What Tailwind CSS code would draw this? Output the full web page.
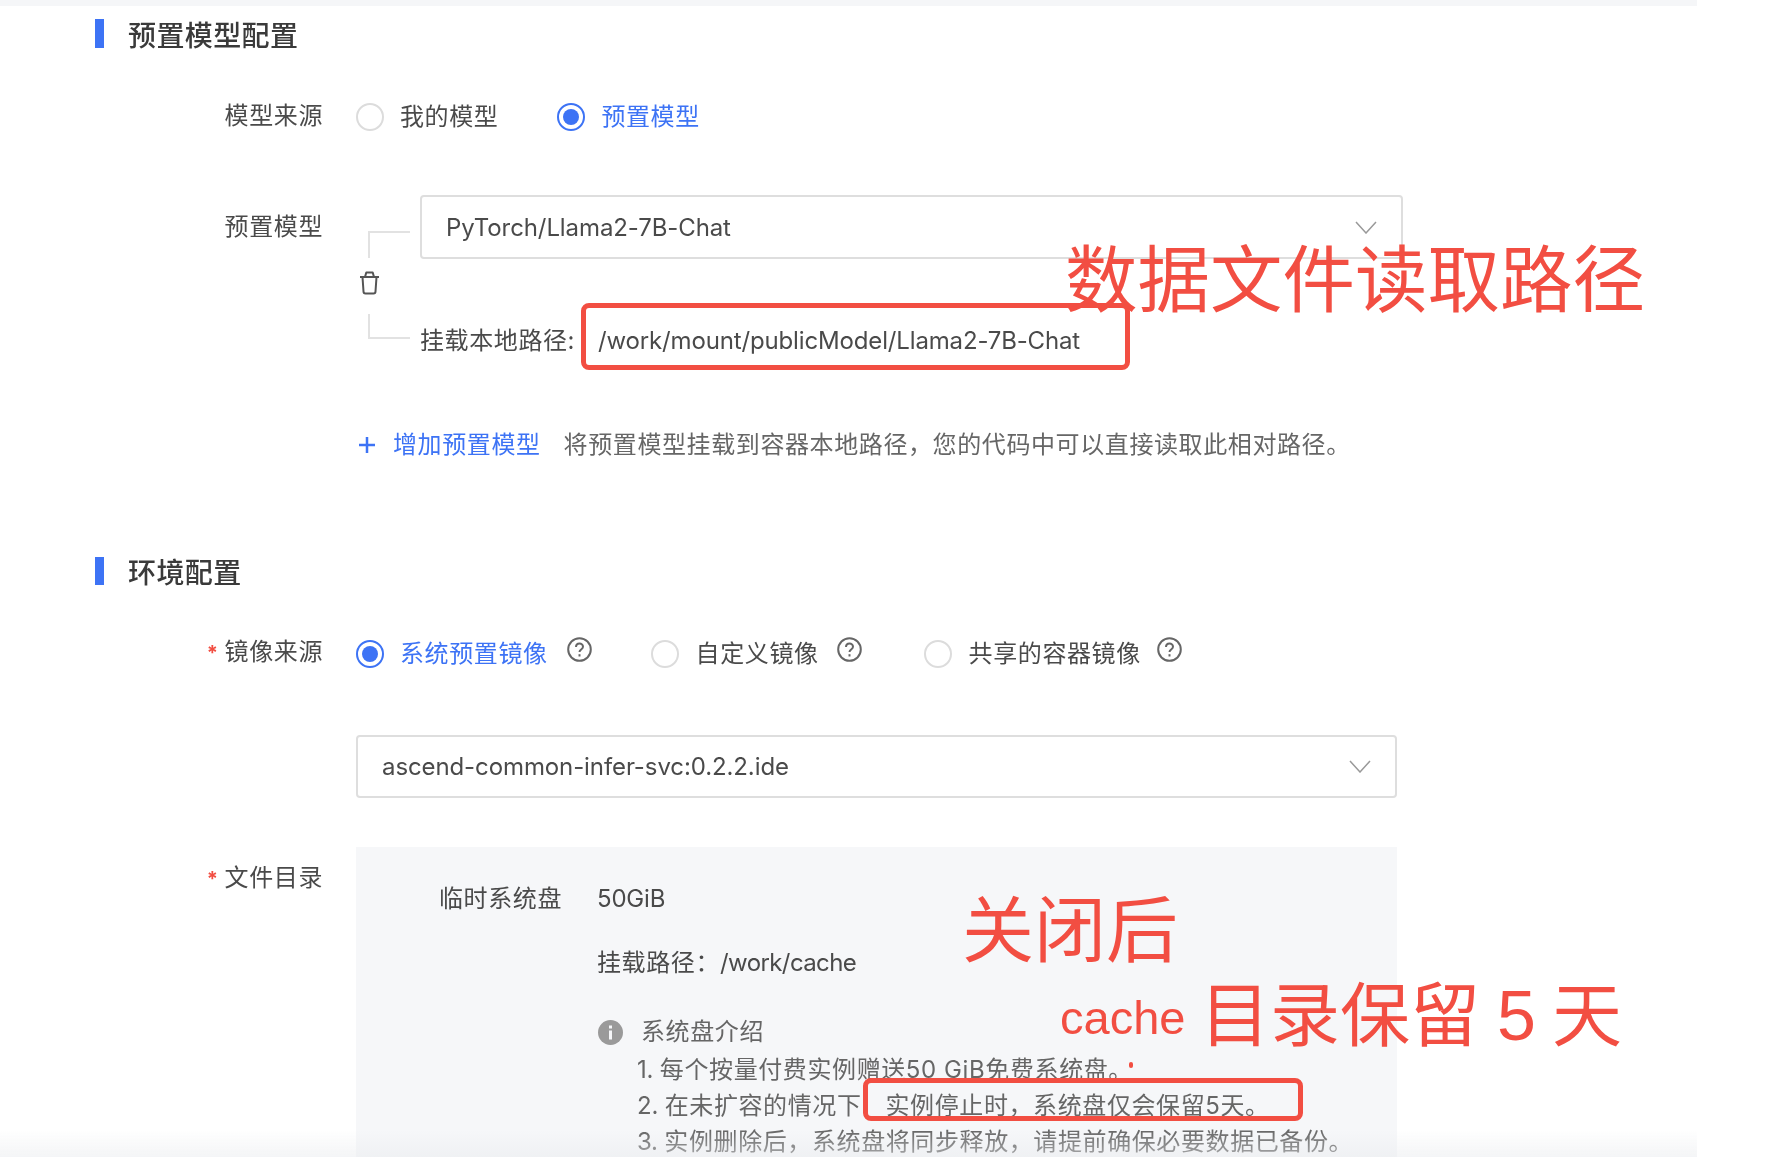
<!DOCTYPE html>
<html lang="zh-CN">
<head>
    <meta charset="UTF-8">
    <title>预置模型配置</title>
    <script src="https://cdn.jsdelivr.net/npm/@tailwindcss/browser@4"></script>
</head>
<body class="bg-white font-['Inter','Noto_Sans_CJK_SC',sans-serif] text-[24px] tracking-[0.6px] text-[#4a4a4a]">
<div class="relative w-[1791px] h-[1170px] overflow-hidden blur-[0.5px]">
    <div class="h-[6px] w-[1697px] bg-[#f5f6f8]"></div>

    <div class="w-[1697px] h-[1151px] overflow-hidden">
        <!-- 预置模型配置 -->
        <div class="flex items-center h-[29px] mt-[13px] pl-[95px]">
            <div class="w-[9px] h-[29px] bg-[#3d73f5]"></div>
            <h2 class="ml-[24px] mt-[5px] text-[28px] leading-[29px] tracking-[0.4px] font-medium text-[#3a3a3a]">预置模型配置</h2>
        </div>

        <div class="flex items-center h-[28px] mt-[55px]">
            <div class="w-[323px] text-right leading-[24px] -mt-[3px]">模型来源</div>
            <div class="w-[28px] h-[28px] ml-[33px] rounded-full border-2 border-[#dcdcdc]"></div>
            <span class="ml-[16px] leading-[28px]">我的模型</span>
            <div class="w-[28px] h-[28px] ml-[59px] rounded-full border-2 border-[#3d73f5] flex items-center justify-center">
                <div class="w-[16px] h-[16px] rounded-full bg-[#3d73f5]"></div>
            </div>
            <span class="ml-[16px] leading-[28px] text-[#3d73f5]">预置模型</span>
        </div>

        <div class="flex items-start mt-[64px]">
            <div class="w-[323px] text-right leading-[24px] mt-[20px] shrink-0">预置模型</div>
            <div class="w-[97px] shrink-0 flex flex-col items-start pl-[45px] h-[175px]">
                <div class="w-[42px] h-[27px] mt-[36px] border-l-2 border-t-2 border-[#e2e2e2]"></div>
                <svg class="w-[21px] h-[24px] -ml-[9px] mt-[13px]" viewBox="0 0 21 24" fill="none" stroke="#555555" stroke-width="2" stroke-linejoin="round">
                    <path d="M1 6h19M6 6l1.300-4.500h6.400L15 6"/>
                    <path d="M3.500 6l1 14.500a2 2 0 0 0 2 2h8a2 2 0 0 0 2-2l1-14.500"/>
                </svg>
                <div class="w-[42px] h-[25px] mt-[19px] border-l-2 border-b-2 border-[#e2e2e2]"></div>
            </div>
            <div class="flex-1 min-w-0">
                <div class="w-[983px] h-[64px] border-2 border-[#dedede] rounded-[4px] flex items-center justify-between pl-[24px] pr-[24px]">
                    <span class="pt-[2px] tracking-[-0.1px]">PyTorch/Llama2-7B-Chat</span>
                    <svg class="w-[22px] h-[13px]" viewBox="0 0 22 13" fill="none" stroke="#999999" stroke-width="1.500"><path d="M1 1l10 11 10-11"/></svg>
                </div>
                <div class="flex items-center h-[67px] mt-[44px]">
                    <span class="w-[161px] shrink-0 pt-[8px]">挂载本地路径:</span>
                    <div class="w-[549px] h-[67px] border-[5px] border-[#f24e42] rounded-[8px] flex items-center pl-[12px] pt-[8px] tracking-[-0.15px]">/work/mount/publicModel/Llama2-7B-Chat</div>
                </div>
            </div>
        </div>

        <div class="flex items-center h-[30px] mt-[60px] pl-[358px]">
            <svg class="w-[18px] h-[18px]" viewBox="0 0 18 18" fill="none" stroke="#3d73f5" stroke-width="2.500"><path d="M9 1v16M1 9h16"/></svg>
            <span class="ml-[17px] text-[#3d73f5]">增加预置模型</span>
            <span class="ml-[23px] text-[#666666]">将预置模型挂载到容器本地路径，您的代码中可以直接读取此相对路径。</span>
        </div>

        <!-- 环境配置 -->
        <div class="flex items-center h-[28px] mt-[97px] pl-[95px]">
            <div class="w-[9px] h-[28px] bg-[#3d73f5]"></div>
            <h2 class="ml-[24px] mt-[3px] text-[28px] leading-[28px] tracking-[0.4px] font-medium text-[#3a3a3a]">环境配置</h2>
        </div>

        <div class="flex items-center h-[28px] mt-[55px]">
            <div class="w-[323px] text-right leading-[24px] -mt-[4px]"><span class="text-[#f24e42] text-[20px] font-bold mr-[6px]">*</span>镜像来源</div>
            <div class="w-[28px] h-[28px] ml-[33px] rounded-full border-2 border-[#3d73f5] flex items-center justify-center">
                <div class="w-[16px] h-[16px] rounded-full bg-[#3d73f5]"></div>
            </div>
            <span class="ml-[16px] text-[#3d73f5]">系统预置镜像</span>
            <svg class="w-[25px] h-[25px] ml-[19px] -mt-[10px]" viewBox="0 0 25 25" fill="none" stroke="#666666" stroke-width="2"><circle cx="12.500" cy="12.500" r="11.300"/><path d="M9 10c0-2 1.500-3.500 3.500-3.500s3.500 1.500 3.500 3.200c0 2.800-3.500 2.800-3.500 5.300"/><path d="M12.500 17.200v2.300"/></svg>
            <div class="w-[28px] h-[28px] ml-[59px] rounded-full border-2 border-[#dcdcdc]"></div>
            <span class="ml-[17px]">自定义镜像</span>
            <svg class="w-[25px] h-[25px] ml-[18px] -mt-[10px]" viewBox="0 0 25 25" fill="none" stroke="#666666" stroke-width="2"><circle cx="12.500" cy="12.500" r="11.300"/><path d="M9 10c0-2 1.500-3.500 3.500-3.500s3.500 1.500 3.500 3.200c0 2.800-3.500 2.800-3.500 5.300"/><path d="M12.500 17.200v2.300"/></svg>
            <div class="w-[28px] h-[28px] ml-[62px] rounded-full border-2 border-[#dcdcdc]"></div>
            <span class="ml-[17px]">共享的容器镜像</span>
            <svg class="w-[25px] h-[25px] ml-[16px] -mt-[10px]" viewBox="0 0 25 25" fill="none" stroke="#666666" stroke-width="2"><circle cx="12.500" cy="12.500" r="11.300"/><path d="M9 10c0-2 1.500-3.500 3.500-3.500s3.500 1.500 3.500 3.200c0 2.800-3.500 2.800-3.500 5.300"/><path d="M12.500 17.200v2.300"/></svg>
        </div>

        <div class="ml-[356px] w-[1041px] h-[63px] mt-[67px] border-2 border-[#dedede] rounded-[4px] flex items-center justify-between pl-[24px] pr-[24px]">
            <span class="tracking-[-0.1px]">ascend-common-infer-svc:0.2.2.ide</span>
            <svg class="w-[22px] h-[13px]" viewBox="0 0 22 13" fill="none" stroke="#999999" stroke-width="1.500"><path d="M1 1l10 11 10-11"/></svg>
        </div>

        <div class="flex items-start mt-[49px]">
            <div class="w-[323px] text-right leading-[24px] mt-[19px] shrink-0"><span class="text-[#f24e42] text-[20px] font-bold mr-[6px]">*</span>文件目录</div>
            <div class="ml-[33px] w-[1041px] h-[310px] bg-[#f6f7f9]">
                <div class="flex h-[28px] mt-[38px] items-center">
                    <span class="w-[206px] text-right shrink-0">临时系统盘</span>
                    <span class="ml-[35px] tracking-[-0.2px]">50GiB</span>
                </div>
                <div class="pl-[241px] mt-[36px] leading-[28px]">挂载路径：<span class="tracking-[-0.6px]">/work/cache</span></div>
                <div class="flex items-center pl-[242px] h-[28px] mt-[41px] text-[#666666]">
                    <svg class="w-[25px] h-[25px]" viewBox="0 0 25 25"><circle cx="12.500" cy="12.500" r="12.500" fill="#9a9a9a"/><rect x="11" y="10.500" width="3" height="9" fill="#f6f7f9"/><rect x="11" y="5.500" width="3" height="3" fill="#f6f7f9"/></svg>
                    <span class="ml-[18px]">系统盘介绍</span>
                </div>
                <div class="pl-[281px] mt-[6px] leading-[36px] text-[#666666]">
                    <div class="whitespace-nowrap"><span class="tracking-[-0.2px]">1. </span>每个按量付费实例赠送50 GiB免费系统盘。</div>
                    <div class="whitespace-nowrap"><span class="tracking-[-0.2px]">2. </span>在未扩容的情况下<span class="ml-[24px]">实例停止时，系统盘仅会保留5天。</span></div>
                    <div class="whitespace-nowrap"><span class="tracking-[-0.2px]">3. </span>实例删除后，系统盘将同步释放，请提前确保必要数据已备份。</div>
                </div>
            </div>
        </div>
    </div>

    <!-- bottom fade of the screenshot -->
    <div class="absolute left-0 top-[1130px] w-[1697px] h-[27px] bg-gradient-to-b from-transparent to-[#e9ebee]/50"></div>

    <!-- red annotations over the form -->
    <div class="absolute left-[1065px] top-[235px] text-[72.5px] tracking-normal leading-[90px] text-[#f24e42] whitespace-nowrap">数据文件读取路径</div>
    <div class="absolute left-[962px] top-[885px] text-[72px] tracking-normal leading-[90px] text-[#f24e42] whitespace-nowrap">关闭后</div>
    <div class="absolute left-[1060px] top-[988px] font-['Liberation_Sans'] text-[47px] tracking-normal leading-[60px] text-[#f24e42] whitespace-nowrap">cache</div>
    <div class="absolute left-[1200px] top-[971px] flex items-center text-[70px] tracking-normal leading-[90px] text-[#f24e42] whitespace-nowrap">
        <span>目录保留</span>
        <span class="ml-[17px] font-['Liberation_Sans']">5</span>
        <span class="ml-[16px]">天</span>
    </div>
    <div class="absolute left-[863px] top-[1078px] w-[440px] h-[43px] border-[5px] border-[#f24e42] rounded-[8px]"></div>
    <div class="absolute left-[1129px] top-[1062px] w-[4px] h-[6px] rounded-full bg-[#f24e42]"></div>
</div>
</body>
</html>
